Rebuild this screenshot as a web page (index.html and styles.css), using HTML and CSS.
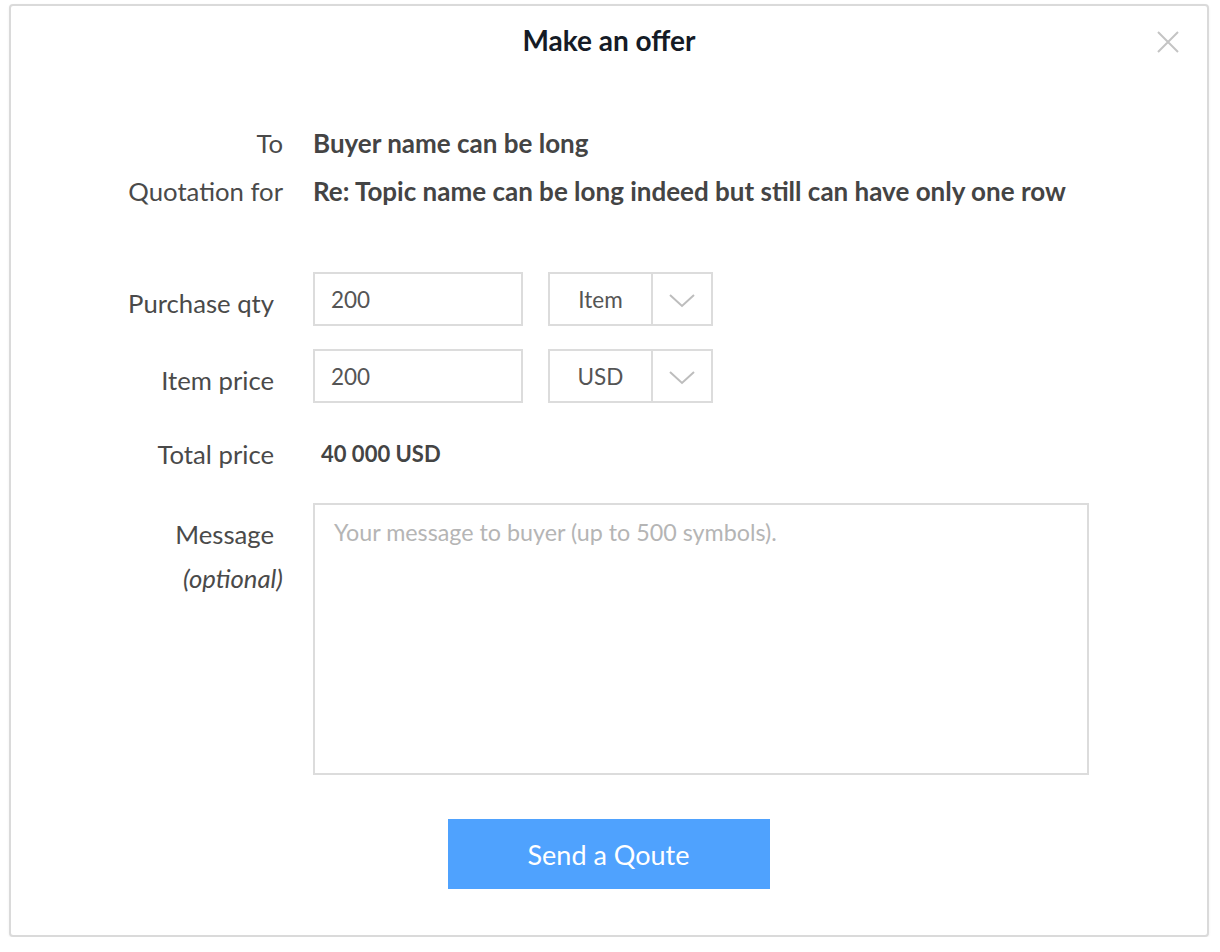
FILE: index.html
```html
<!DOCTYPE html>
<html lang="en">
<head>
<meta charset="utf-8">
<title>Make an offer</title>
<link rel="stylesheet" href="styles.css">
</head>
<body>
<div class="modal">
  <h1 class="title">Make an offer</h1>
  <button class="close" type="button" aria-label="Close">
    <svg width="22" height="22" viewBox="0 0 22 22"><path d="M1 1 L21 21 M21 1 L1 21" stroke="#c4c4c4" stroke-width="2" fill="none"/></svg>
  </button>

  <div class="info">
    <div class="info-row"><span class="info-label">To</span><span class="info-value">Buyer name can be long</span></div>
    <div class="info-row"><span class="info-label">Quotation for</span><span class="info-value">Re: Topic name can be long indeed but still can have only one row</span></div>
  </div>

  <form class="form">
    <div class="frow">
      <label class="flabel">Purchase qty</label>
      <input class="field" type="text" value="200">
      <div class="select">
        <span class="select-text">Item</span>
        <span class="select-arrow"><svg width="28" height="16" viewBox="0 0 28 16"><path d="M2 2 L14 13 L26 2" stroke="#bdbdbd" stroke-width="2" fill="none"/></svg></span>
      </div>
    </div>
    <div class="frow">
      <label class="flabel">Item price</label>
      <input class="field" type="text" value="200">
      <div class="select">
        <span class="select-text">USD</span>
        <span class="select-arrow"><svg width="28" height="16" viewBox="0 0 28 16"><path d="M2 2 L14 13 L26 2" stroke="#bdbdbd" stroke-width="2" fill="none"/></svg></span>
      </div>
    </div>
    <div class="frow total-row">
      <span class="flabel">Total price</span>
      <span class="total-value">40 000 USD</span>
    </div>
    <div class="frow message-row">
      <label class="flabel msg-label">Message<br><em>(optional)</em></label>
      <textarea class="message" placeholder="Your message to buyer (up to 500 symbols)."></textarea>
    </div>
    <div class="actions">
      <button class="send" type="button">Send a Qoute</button>
    </div>
  </form>
</div>
</body>
</html>
```

FILE: styles.css
```css
* { box-sizing: border-box; }

html, body {
  margin: 0;
  padding: 0;
  background: #ffffff;
}

body {
  font-family: Lato, "Open Sans", sans-serif;
  color: #4a4a4a;
}

.modal {
  position: relative;
  width: 1200px;
  height: 933px;
  margin: 4px 0 0 9px;
  border: 2px solid #dadada;
  border-radius: 4px;
  background: #ffffff;
  box-shadow: 0 1px 3px rgba(0, 0, 0, 0.06);
}

.title {
  margin: 0;
  padding-top: 16px;
  font-size: 28px;
  line-height: 36px;
  font-weight: 700;
  text-align: center;
  color: #151b26;
}

.close {
  position: absolute;
  top: 25px;
  right: 28px;
  width: 22px;
  height: 22px;
  padding: 0;
  border: 0;
  background: none;
  display: flex;
}

.info {
  margin-top: 61px;
  display: flex;
  flex-direction: column;
}

.info-row {
  display: flex;
  align-items: center;
  height: 48px;
}

.info-label {
  width: 272px;
  text-align: right;
  font-size: 25.7px;
}

.info-value {
  margin-left: 30px;
  font-size: 26px;
  font-weight: 700;
  color: #444444;
  white-space: nowrap;
}

.form {
  margin-top: 57px;
  display: flex;
  flex-direction: column;
}

.frow {
  display: flex;
  align-items: center;
  height: 54px;
  margin-bottom: 23px;
}

.flabel {
  width: 263px;
  text-align: right;
  font-size: 25.7px;
  padding-top: 8px;
  color: #4a4a4a;
}

.field {
  margin-left: 39px;
  width: 210px;
  height: 54px;
  border: 2px solid #dcdcdc;
  border-radius: 0;
  padding: 0 16px;
  font-family: inherit;
  font-size: 22.5px;
  color: #555555;
  outline: none;
}

.select {
  margin-left: 25px;
  width: 165px;
  height: 54px;
  border: 2px solid #dcdcdc;
  display: flex;
}

.select-text {
  width: 103px;
  display: flex;
  align-items: center;
  justify-content: center;
  font-size: 22.5px;
  color: #555555;
  border-right: 2px solid #dcdcdc;
}

.select-arrow {
  flex: 1;
  display: flex;
  align-items: center;
  justify-content: center;
  padding-top: 3px;
}

.total-row {
  height: 46px;
  margin-top: 6px;
  margin-bottom: 25px;
  align-items: flex-start;
}

.total-row .flabel {
  padding-top: 7px;
}

.total-value {
  margin-left: 47px;
  font-size: 22px;
  font-weight: 700;
  color: #444444;
  padding-top: 8px;
}

.message-row {
  height: 272px;
  align-items: flex-start;
  margin-bottom: 44px;
}

.msg-label {
  padding-top: 9px;
  line-height: 44px;
}

.msg-label em {
  font-style: italic;
  margin-right: -9px;
}

.message {
  margin-left: 39px;
  width: 776px;
  height: 272px;
  border: 2px solid #dcdcdc;
  border-radius: 0;
  padding: 13px 19px;
  font-family: inherit;
  font-size: 23.3px;
  line-height: 28px;
  color: #555555;
  resize: none;
  outline: none;
}

.message::placeholder {
  color: #b5b5b5;
}

.actions {
  display: flex;
  justify-content: center;
}

.send {
  width: 322px;
  height: 70px;
  border: 0;
  border-radius: 0;
  background: #4fa2fe;
  color: #ffffff;
  font-family: inherit;
  font-size: 27px;
  margin-left: -1px;
}
```
